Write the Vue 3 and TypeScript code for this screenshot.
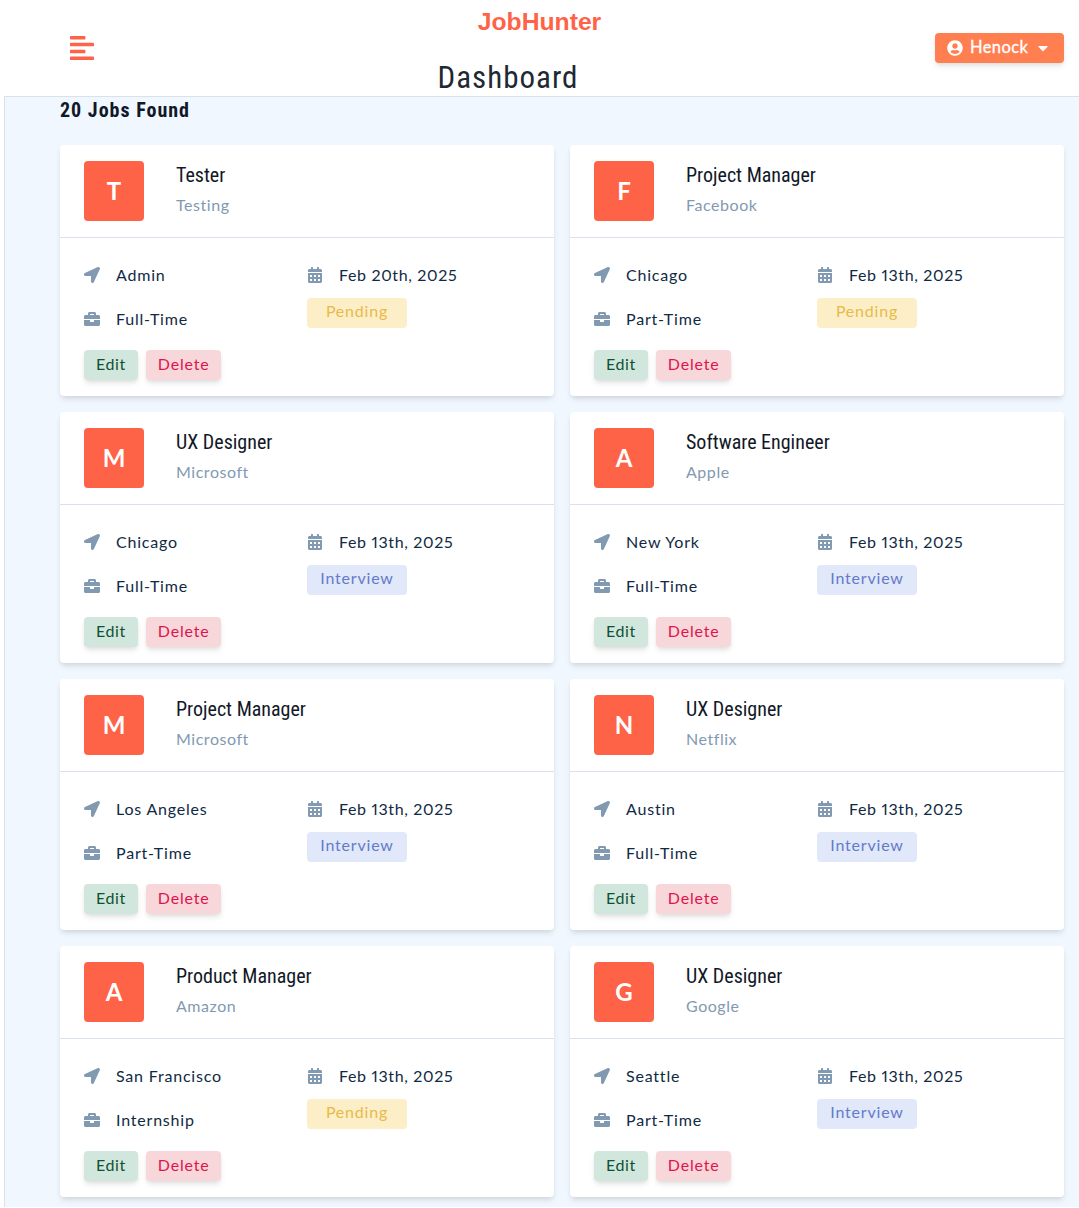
<template>
  <div class="app">
    <nav class="navbar">
      <button class="toggle-btn" type="button" aria-label="Toggle sidebar">
        <svg viewBox="0 0 448 512" width="24" height="28"><path d="M12.83 352h262.34A12.82 12.82 0 0 0 288 339.17v-38.34A12.82 12.82 0 0 0 275.17 288H12.83A12.82 12.82 0 0 0 0 300.83v38.34A12.82 12.82 0 0 0 12.83 352zm0-256h262.34A12.82 12.82 0 0 0 288 83.17V44.83A12.82 12.82 0 0 0 275.17 32H12.83A12.82 12.82 0 0 0 0 44.83v38.34A12.82 12.82 0 0 0 12.83 96zM432 160H16a16 16 0 0 0-16 16v32a16 16 0 0 0 16 16h416a16 16 0 0 0 16-16v-32a16 16 0 0 0-16-16zm0 256H16a16 16 0 0 0-16 16v32a16 16 0 0 0 16 16h416a16 16 0 0 0 16-16v-32a16 16 0 0 0-16-16z" /></svg>
      </button>
      <div class="nav-center">
        <div class="logo">JobHunter</div>
        <h3 class="page-title">Dashboard</h3>
      </div>
      <button class="user-btn" type="button">
        <svg viewBox="0 0 496 512" width="16" height="16"><path d="M248 8C111 8 0 119 0 256s111 248 248 248 248-111 248-248S385 8 248 8zm0 96c48.6 0 88 39.4 88 88s-39.4 88-88 88-88-39.4-88-88 39.4-88 88-88zm0 344c-58.7 0-111.3-26.6-146.5-68.2 18.8-35.4 55.6-59.8 98.5-59.8 2.4 0 4.8.4 7.1 1.1 13 4.2 26.6 6.9 40.9 6.9 14.3 0 28-2.7 40.9-6.9 2.3-.7 4.7-1.1 7.1-1.1 42.9 0 79.7 24.4 98.5 59.8C359.3 421.4 306.7 448 248 448z" /></svg>
        <span class="user-name">Henock</span>
        <svg viewBox="0 0 320 512" width="10" height="16"><path d="M31.3 192h257.3c17.8 0 26.7 21.5 14.1 34.1L174.1 354.8c-7.8 7.8-20.5 7.8-28.3 0L17.2 226.1C4.6 213.5 13.5 192 31.3 192z" /></svg>
      </button>
    </nav>

    <main class="main">
      <h5 class="found">20 Jobs Found</h5>
      <div class="jobs">
        <article v-for="job in jobs" :key="job.position + job.company" class="job">
          <header class="job-header">
            <div class="avatar">{{ job.company.charAt(0) }}</div>
            <div class="job-title">
              <h5>{{ job.position }}</h5>
              <p>{{ job.company }}</p>
            </div>
          </header>
          <div class="job-body">
            <div class="info-grid">
              <div class="info-col">
                <div class="info">
                  <svg class="ico" viewBox="0 0 512 512"><path d="M444.52 3.52L28.74 195.42c-47.97 22.39-31.98 92.75 19.19 92.75h175.91v175.91c0 51.17 70.36 67.17 92.75 19.19l191.9-415.78c15.99-38.39-25.59-79.97-63.97-63.97z" /></svg>
                  <span>{{ job.location }}</span>
                </div>
                <div class="info">
                  <svg class="ico" viewBox="0 0 512 512"><path d="M320 336c0 8.84-7.16 16-16 16h-96c-8.84 0-16-7.16-16-16v-48H0v144c0 25.6 22.4 48 48 48h416c25.6 0 48-22.4 48-48V288H320v48zm144-208h-80V80c0-25.6-22.4-48-48-48H176c-25.6 0-48 22.4-48 48v48H48c-25.6 0-48 22.4-48 48v80h512v-80c0-25.6-22.4-48-48-48zm-144 0H192V96h128v32z" /></svg>
                  <span>{{ job.type }}</span>
                </div>
              </div>
              <div class="info-col">
                <div class="info">
                  <svg class="ico" viewBox="0 0 448 512"><path d="M0 464c0 26.5 21.5 48 48 48h352c26.5 0 48-21.5 48-48V192H0v272zm320-196c0-6.6 5.4-12 12-12h40c6.6 0 12 5.4 12 12v40c0 6.6-5.4 12-12 12h-40c-6.6 0-12-5.4-12-12v-40zm0 128c0-6.6 5.4-12 12-12h40c6.6 0 12 5.4 12 12v40c0 6.6-5.4 12-12 12h-40c-6.6 0-12-5.4-12-12v-40zM192 268c0-6.6 5.4-12 12-12h40c6.6 0 12 5.4 12 12v40c0 6.6-5.4 12-12 12h-40c-6.6 0-12-5.4-12-12v-40zm0 128c0-6.6 5.4-12 12-12h40c6.6 0 12 5.4 12 12v40c0 6.6-5.4 12-12 12h-40c-6.6 0-12-5.4-12-12v-40zM64 268c0-6.6 5.4-12 12-12h40c6.6 0 12 5.4 12 12v40c0 6.6-5.4 12-12 12H76c-6.6 0-12-5.4-12-12v-40zm0 128c0-6.6 5.4-12 12-12h40c6.6 0 12 5.4 12 12v40c0 6.6-5.4 12-12 12H76c-6.6 0-12-5.4-12-12v-40zM400 64h-48V16c0-8.8-7.2-16-16-16h-32c-8.8 0-16 7.2-16 16v48H160V16c0-8.8-7.2-16-16-16h-32c-8.8 0-16 7.2-16 16v48H48C21.5 64 0 85.5 0 112v48h448v-48c0-26.5-21.5-48-48-48z" /></svg>
                  <span class="date">{{ job.date }}</span>
                </div>
                <div class="status" :class="job.status.toLowerCase()">{{ job.status }}</div>
              </div>
            </div>
            <footer class="actions">
              <a class="btn edit-btn">Edit</a>
              <button class="btn delete-btn" type="button">Delete</button>
            </footer>
          </div>
        </article>
      </div>
    </main>
  </div>
</template>

<script setup lang="ts">
interface Job {
  position: string;
  company: string;
  location: string;
  type: string;
  date: string;
  status: "Pending" | "Interview";
}

const jobs: Job[] = [
  { position: "Tester", company: "Testing", location: "Admin", type: "Full-Time", date: "Feb 20th, 2025", status: "Pending" },
  { position: "Project Manager", company: "Facebook", location: "Chicago", type: "Part-Time", date: "Feb 13th, 2025", status: "Pending" },
  { position: "UX Designer", company: "Microsoft", location: "Chicago", type: "Full-Time", date: "Feb 13th, 2025", status: "Interview" },
  { position: "Software Engineer", company: "Apple", location: "New York", type: "Full-Time", date: "Feb 13th, 2025", status: "Interview" },
  { position: "Project Manager", company: "Microsoft", location: "Los Angeles", type: "Part-Time", date: "Feb 13th, 2025", status: "Interview" },
  { position: "UX Designer", company: "Netflix", location: "Austin", type: "Full-Time", date: "Feb 13th, 2025", status: "Interview" },
  { position: "Product Manager", company: "Amazon", location: "San Francisco", type: "Internship", date: "Feb 13th, 2025", status: "Pending" },
  { position: "UX Designer", company: "Google", location: "Seattle", type: "Part-Time", date: "Feb 13th, 2025", status: "Interview" },
];
</script>

<style>
html,
body {
  margin: 0;
  background: #fff;
}
</style>

<style scoped>
.app {
  font-family: Lato, "Open Sans", sans-serif;
  color: #102a43;
  height: 1208px;
  overflow: hidden;
}

.navbar {
  height: 96px;
  display: flex;
  align-items: center;
  padding: 0 15px 0 70px;
  background: #fff;
  box-sizing: border-box;
}

.toggle-btn {
  background: none;
  border: none;
  padding: 0;
  display: flex;
  margin-top: -1px;
}

.toggle-btn svg {
  fill: #ff6347;
}

.nav-center {
  flex: 1;
  align-self: flex-start;
  text-align: center;
}

.logo {
  font-family: "Liberation Sans", Arial, sans-serif;
  font-weight: 700;
  font-size: 24.7px;
  line-height: 30px;
  color: #ff6347;
  padding-left: 50px;
  margin-top: 7px;
}

.page-title {
  margin: 23px 13px 0 0;
  font-family: Roboto, sans-serif;
  font-stretch: condensed;
  font-weight: 400;
  font-size: 31px;
  line-height: 36px;
  letter-spacing: 1px;
  color: #1f2933;
}

.user-btn {
  width: 129px;
  height: 30px;
  padding: 0 0 0 12px;
  display: flex;
  align-items: center;
  background: #ff7f50;
  color: #fff;
  border: none;
  border-radius: 4px;
  box-shadow: 0 4px 6px -1px rgba(0, 0, 0, 0.1), 0 2px 4px -1px rgba(0, 0, 0, 0.06);
  font-family: inherit;
  font-size: 16.5px;
  letter-spacing: 0.4px;
  margin-top: -1px;
}

.user-btn svg {
  fill: currentColor;
}

.user-name {
  margin: -2px 10px 0 7px;
  -webkit-text-stroke: 0.3px #fff;
}

.main {
  margin-left: 4px;
  min-height: 1111px;
  padding: 0 15px 0 55px;
  background: #f0f7ff;
  border-top: 1px solid #d9e2ec;
  border-left: 1px solid #d9e2ec;
  box-sizing: border-box;
}

.found {
  margin: 0;
  padding-top: 1px;
  height: 48px;
  box-sizing: border-box;
  font-family: Roboto, sans-serif;
  font-stretch: condensed;
  font-weight: 700;
  font-size: 20px;
  line-height: 25px;
  letter-spacing: 1px;
  color: #111827;
}

.jobs {
  display: grid;
  grid-template-columns: 1fr 1fr;
  gap: 16px;
}

.job {
  background: #fff;
  border-radius: 4px;
  height: 251px;
  box-shadow: 0 4px 6px -1px rgba(0, 0, 0, 0.1), 0 2px 4px -1px rgba(0, 0, 0, 0.06);
}

.job-header {
  height: 93px;
  box-sizing: border-box;
  padding: 16px 24px;
  display: grid;
  grid-template-columns: 60px 1fr;
  column-gap: 32px;
  border-bottom: 1px solid #d9e2ec;
}

.avatar {
  width: 60px;
  height: 60px;
  box-sizing: border-box;
  padding-bottom: 2px;
  background: #ff6347;
  border-radius: 4px;
  color: #fff;
  display: grid;
  place-items: center;
  font-size: 24px;
  font-weight: 700;
}

.job-title h5 {
  margin: -1px 0 0;
  font-family: Roboto, sans-serif;
  font-stretch: condensed;
  font-weight: 400;
  font-size: 20px;
  line-height: 30px;
  color: #111827;
}

.job-title p {
  margin: 1px 0 0;
  font-size: 16px;
  line-height: 28px;
  letter-spacing: 0.55px;
  color: #829ab1;
}

.job-body {
  padding: 15px 24px 0;
}

.info-grid {
  display: grid;
  grid-template-columns: 223px 1fr;
  height: 97px;
}

.info-col {
  display: flex;
  flex-direction: column;
}

.info {
  height: 44px;
  display: flex;
  align-items: center;
  font-size: 16px;
  letter-spacing: 0.8px;
}

.info span {
  margin-bottom: 2px;
}

.date {
  font-variant-numeric: proportional-nums;
  letter-spacing: 0.65px;
}

.ico {
  width: 16px;
  height: 16px;
  margin-right: 16px;
  fill: #829ab1;
  flex: none;
}

.status {
  width: 100px;
  height: 30px;
  box-sizing: border-box;
  padding-bottom: 5px;
  margin-top: 1px;
  border-radius: 4px;
  display: grid;
  place-items: center;
  font-size: 16px;
  letter-spacing: 0.8px;
}

.pending {
  background: #fcefc7;
  color: #e9b949;
}

.interview {
  background: #e0e8f9;
  color: #647acb;
}

.actions {
  display: flex;
  gap: 8px;
}

.btn {
  height: 30px;
  box-sizing: border-box;
  padding: 0 12px 4px;
  display: grid;
  place-items: center;
  border: none;
  border-radius: 4px;
  font-family: inherit;
  font-size: 16px;
  letter-spacing: 0.6px;
  box-shadow: 0 4px 6px -1px rgba(0, 0, 0, 0.1), 0 2px 4px -1px rgba(0, 0, 0, 0.06);
}

.edit-btn {
  background: #d1e7dd;
  color: #0f5132;
}

.delete-btn {
  background: #f8d7da;
  color: #e0144c;
  letter-spacing: 0.8px;
}
</style>
